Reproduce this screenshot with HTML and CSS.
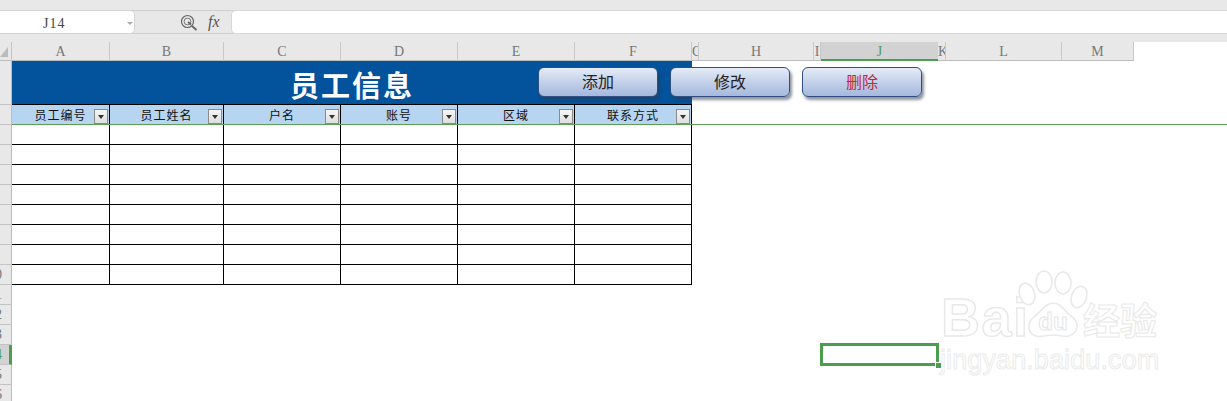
FILE: index.html
```html
<!DOCTYPE html>
<html lang="zh">
<head>
<meta charset="utf-8">
<title>员工信息</title>
<link rel="stylesheet" href="styles.css">
</head>
<body>
<div class="app">
  <div class="top-strip"></div>
  <div class="formula">
    <div class="namebox"><span class="nameval">J14</span><i class="caret"></i></div>
    <div class="tools">
      <svg class="zoom" width="18" height="18" viewBox="0 0 18 18"><circle cx="7.5" cy="7.5" r="6" fill="none" stroke="#666" stroke-width="1.2"/><circle cx="7.5" cy="7.5" r="3.4" fill="none" stroke="#777" stroke-width="1"/><path d="M8 8l3 2.5M12 12l4.5 4" fill="none" stroke="#666" stroke-width="1.8"/></svg>
      <span class="fx">fx</span>
    </div>
    <div class="input"></div>
  </div>
  <div class="strip"></div>
  <div class="colhead">
    <div class="corner"><i></i></div>
    <div class="col">A</div><div class="col">B</div><div class="col">C</div><div class="col">D</div><div class="col">E</div><div class="col">F</div><div class="col">G</div><div class="col">H</div><div class="col">I</div><div class="col sel">J</div><div class="col">K</div><div class="col">L</div><div class="col">M</div>
  </div>
  <div class="sheet">
    <div class="rows">
      <div class="row r-title"></div>
      <div class="row"></div><div class="row"></div><div class="row"></div><div class="row"></div><div class="row"></div><div class="row"></div><div class="row"></div><div class="row"></div>
      <div class="row"><span>10</span></div>
      <div class="row"><span>11</span></div>
      <div class="row"><span>12</span></div>
      <div class="row"><span>13</span></div>
      <div class="row cur"><span>14</span></div>
      <div class="row"><span>15</span></div>
      <div class="row"><span>16</span></div>
    </div>
    <div class="table">
      <div class="title">员工信息</div>
      <div class="th">员工编号<i class="filter"></i></div>
      <div class="th">员工姓名<i class="filter"></i></div>
      <div class="th">户名<i class="filter"></i></div>
      <div class="th">账号<i class="filter"></i></div>
      <div class="th">区域<i class="filter"></i></div>
      <div class="th">联系方式<i class="filter"></i></div>
      <div class="td"></div><div class="td"></div><div class="td"></div><div class="td"></div><div class="td"></div><div class="td"></div>
      <div class="td"></div><div class="td"></div><div class="td"></div><div class="td"></div><div class="td"></div><div class="td"></div>
      <div class="td"></div><div class="td"></div><div class="td"></div><div class="td"></div><div class="td"></div><div class="td"></div>
      <div class="td"></div><div class="td"></div><div class="td"></div><div class="td"></div><div class="td"></div><div class="td"></div>
      <div class="td"></div><div class="td"></div><div class="td"></div><div class="td"></div><div class="td"></div><div class="td"></div>
      <div class="td"></div><div class="td"></div><div class="td"></div><div class="td"></div><div class="td"></div><div class="td"></div>
      <div class="td"></div><div class="td"></div><div class="td"></div><div class="td"></div><div class="td"></div><div class="td"></div>
      <div class="td"></div><div class="td"></div><div class="td"></div><div class="td"></div><div class="td"></div><div class="td"></div>
    </div>
  </div>

  <div class="freeze"></div>
  <div class="buttons">
    <button class="btn">添加</button>
    <button class="btn">修改</button>
    <button class="btn danger">删除</button>
  </div>
  <div class="selection"><i></i></div>

  <div class="mark">
    <div class="mark-top">
      <span class="bai">Bai</span>
      <svg class="paw" width="76" height="72" viewBox="0 0 76 72">
        <g fill="#fff" stroke="#e9e9e9" stroke-width="1.6">
          <ellipse cx="11" cy="24" rx="7.5" ry="11" transform="rotate(-18 11 24)"/>
          <ellipse cx="28" cy="12" rx="8" ry="11"/>
          <ellipse cx="47" cy="13" rx="8" ry="11"/>
          <ellipse cx="63" cy="27" rx="7.5" ry="11" transform="rotate(20 63 27)"/>
          <path d="M37 33c8 0 11 8 18 13 7 5 8 12 3 17-6 6-13 2-21 2s-15 4-21 -1c-5-5-4-12 2-17 7-5 11-14 19-14z"/>
        </g>
        <text x="37" y="60" class="du">du</text>
      </svg>
      <span class="jy">经验</span>
    </div>
    <div class="mark-url">jingyan.baidu.com</div>
  </div>
</div>
</body>
</html>
```
FILE: styles.css
```css
* { box-sizing: border-box; }
html, body { margin: 0; padding: 0; background: #fff; }
.app { position: relative; width: 1227px; height: 401px; overflow: hidden; background: #fff; font-family: "Liberation Serif", serif; }

.top-strip { height: 11px; background: #e8e8e8; border-bottom: 1px solid #cfcfcf; }
.formula { display: flex; height: 23px; background: #e8e8e8; border-bottom: 1px solid #cfcfcf; }
.namebox { position: relative; width: 135px; height: 24px; margin-top: -1px; background: #fff; border: 1px solid #d4d4d4; border-left: 0; border-radius: 0 5px 5px 0; font-size: 14px; line-height: 25px; letter-spacing: 1px; color: #444; }
.nameval { display: block; padding-left: 43px; }
.caret { position: absolute; left: 127px; top: 11px; width: 0; height: 0; border: 3px solid transparent; border-top: 3px solid #aaa; }
.tools { display: flex; align-items: center; width: 96px; padding-left: 45px; gap: 10px; }
.zoom { display: block; margin-top: 1px; }
.fx { font: italic 16px "Liberation Serif", serif; color: #555; }
.input { flex: 1; height: 24px; margin-top: -1px; background: #fff; border: 1px solid #d8d8d8; border-right: 0; border-radius: 5px 0 0 5px; }
.strip { height: 8px; background: #e8e8e8; }

.colhead { display: grid; width: 1134px; height: 19px; grid-template-columns: 12px 98px 114px 117px 117px 117px 117px 7px 115px 7px 117px 8px 116px 72px; background: #e8e8e8; border-bottom: 1px solid #bdbdbd; border-right: 1px solid #bdbdbd; }
.corner { position: relative; border-right: 1px solid #c4c4c4; }
.corner i { display: block; width: 8px; height: 10px; margin-top: 5px; background: #bcbcbc; clip-path: polygon(100% 0, 100% 100%, 0 100%); }
.col { overflow: hidden; text-align: center; font-size: 14px; line-height: 20px; color: #777; border-right: 1px solid #c8c8c8; white-space: nowrap; }
.col.sel { background: #d2d2d2; color: #4d9e50; border-right: 0; border-bottom: 2px solid #4a9e4d; height: 19px; }

.sheet { display: flex; }
.rows { width: 12px; flex: none; }
.row { display: flex; justify-content: flex-end; height: 20px; padding-right: 9px; overflow: hidden; background: #e8e8e8; border-right: 1px solid #bdbdbd; border-bottom: 1px solid #c4c4c4; font-size: 14px; line-height: 20px; color: #777; }
.r-title { height: 44px; }
.row.cur { background: #d2d2d2; color: #4d9e50; border-right: 3px solid #4a9e4d; padding-right: 7px; }

.table { display: grid; width: 680px; grid-template-columns: 98px 114px 117px 117px 117px 117px; grid-template-rows: 44px; grid-auto-rows: 20px; align-self: start; }
.title { grid-column: 1 / -1; background: #02529c; color: #fff; border-bottom: 1px solid #000; text-align: center; font: bold 29px/47px "Noto Sans CJK SC", sans-serif; letter-spacing: 2px; }
.th { position: relative; background: #b7d5f0; border-right: 1px solid #000; border-bottom: 1px solid #000; text-align: center; font: 12px/19px "Noto Sans CJK SC", sans-serif; letter-spacing: 1px; color: #111; }
.td { background: #fff; border-right: 1px solid #000; border-bottom: 1px solid #000; }
.filter { position: absolute; right: 1px; top: 4px; width: 14px; height: 15px; background: linear-gradient(#f6f6f6, #dedede); border: 1px solid #8a8a8a; }
.filter::after { content: ""; position: absolute; left: 3px; top: 5px; border: 3px solid transparent; border-top: 4px solid #333; border-bottom: 0; }

.freeze { position: absolute; left: 12px; right: 0; top: 124px; height: 1px; background: #5b9e54; }

.buttons { position: absolute; left: 538px; top: 67px; display: flex; gap: 12px; }
.btn { width: 120px; height: 30px; padding: 0 0 2px; background: linear-gradient(#e6ecf7, #c6d3ea 45%, #a5b9de); border: 1px solid #2f4f82; border-radius: 6px; box-shadow: 2px 3px 3px rgba(50, 60, 80, .55); font: 16px/26px "Noto Sans CJK SC", sans-serif; color: #222; }
.danger { color: #c0283c; }

.selection { position: absolute; left: 820px; top: 343px; width: 119px; height: 23px; border: 3px solid #4a9e4d; }
.selection i { position: absolute; right: -5px; bottom: -5px; width: 5px; height: 5px; box-sizing: content-box; background: #4a9e4d; border: 1px solid #fff; border-width: 1px 0 0 1px; }

.mark { position: absolute; left: 940px; top: 270px; width: 222px; color: transparent; font-family: "Liberation Sans", sans-serif; }
.mark-top { position: relative; height: 72px; }
.bai { position: absolute; left: 1px; top: 19px; font-size: 54px; line-height: 56px; font-weight: bold; letter-spacing: 1.5px; -webkit-text-stroke: 1.4px #e8e8e8; }
.paw { position: absolute; left: 76px; top: 0; }
.du { font: bold 24px "Liberation Sans", sans-serif; text-anchor: middle; fill: #fff; stroke: #e6e6e6; stroke-width: 1; }
.jy { position: absolute; left: 143px; top: 27px; font: bold 37px/44px "Noto Sans CJK SC", sans-serif; -webkit-text-stroke: 1px #e8e8e8; white-space: nowrap; }
.mark-url { margin-top: 2px; font-size: 27px; line-height: 32px; letter-spacing: 0.1px; white-space: nowrap; -webkit-text-stroke: 1px #ebebeb; }
```
